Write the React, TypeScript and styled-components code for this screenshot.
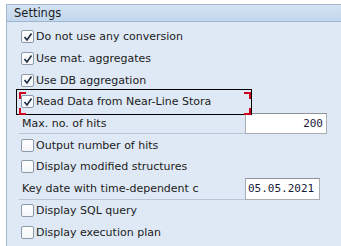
import React from 'react';
import styled, { createGlobalStyle } from 'styled-components';

const GlobalStyle = createGlobalStyle`
  html, body {
    margin: 0;
    padding: 0;
    background: #ffffff;
  }
  body {
    font-family: 'DejaVu Sans', Tahoma, sans-serif;
    font-size: 11px;
    color: #1b1b1b;
  }
`;

const Frame = styled.div`
  margin: 4px 0 0 6px;
  height: 242px;
  border-top: 1px solid #a3b7cf;
  border-left: 1px solid #a3b7cf;
  background: #dfe9f5;
  overflow: hidden;
`;

const Header = styled.div`
  height: 16px;
  line-height: 16px;
  padding-left: 7px;
  background: linear-gradient(#d3e2f3, #c3d7ed);
  border-bottom: 1px solid #9fb6d2;
  font-size: 11.5px;
`;

const Body = styled.div`
  padding: 4px 0 0 14px;
  display: flex;
  flex-direction: column;
`;

const Row = styled.div<{ focused?: boolean }>`
  position: relative;
  height: 21.7px;
  display: flex;
  align-items: center;

  ${({ focused }) =>
    focused &&
    `
    &::before {
      content: '';
      position: absolute;
      left: -5px;
      top: -2px;
      width: 234px;
      height: 24px;
      border: 1px solid #000;
    }
  `}
`;

const Corner = styled.span<{ pos: 'tl' | 'tr' | 'bl' | 'br' }>`
  position: absolute;
  width: 5px;
  height: 5px;
  border-color: #d0021b;
  border-style: solid;
  border-width: 0;
  ${({ pos }) => (pos[0] === 't' ? 'top: 1px; border-top-width: 2px;' : 'bottom: -2px; border-bottom-width: 2px;')}
  ${({ pos }) => (pos[1] === 'l' ? 'left: -2px; border-left-width: 2px;' : 'left: 223px; border-right-width: 2px;')}
`;

const Box = styled.span`
  width: 11px;
  height: 11px;
  border: 1px solid #8c99ab;
  border-radius: 2px;
  background: linear-gradient(#ffffff, #f3f5f8);
  display: flex;
  align-items: center;
  justify-content: center;
  flex-shrink: 0;
  margin-right: 2px;
`;

const Label = styled.span`
  white-space: nowrap;
`;

const FieldRow = styled.div`
  height: 21.7px;
  display: flex;
  align-items: stretch;
`;

const FieldLabel = styled.div`
  width: 226px;
  padding-left: 3px;
  display: flex;
  align-items: center;
  border-bottom: 1px solid #b9c6d6;
  box-sizing: border-box;
  margin-left: -2px;
  white-space: nowrap;
  overflow: hidden;
`;

const Input = styled.div<{ w: number; align: 'left' | 'right' }>`
  width: ${({ w }) => w}px;
  box-sizing: border-box;
  background: #fff;
  border: 1px solid #a9adb3;
  border-top-color: #8e9196;
  font-family: 'DejaVu Sans Mono', 'Liberation Mono', monospace;
  font-size: 11px;
  display: flex;
  align-items: center;
  justify-content: ${({ align }) => (align === 'right' ? 'flex-end' : 'flex-start')};
  padding: 0 3px 0 2px;
  color: #1a1a3a;
`;

const Check = () => (
  <svg width="10" height="10" viewBox="0 0 10 10">
    <path d="M1.5 5 L4 8 L8.5 1.5" fill="none" stroke="#1c2a44" strokeWidth="1.6" />
  </svg>
);

const CheckRow: React.FC<{ label: string; checked?: boolean; focused?: boolean }> = ({ label, checked, focused }) => (
  <Row focused={focused}>
    {focused && (
      <>
        <Corner pos="tl" />
        <Corner pos="tr" />
        <Corner pos="bl" />
        <Corner pos="br" />
      </>
    )}
    <Box>{checked && <Check />}</Box>
    <Label>{label}</Label>
  </Row>
);

export default function App() {
  return (
    <>
      <GlobalStyle />
      <Frame>
        <Header>Settings</Header>
        <Body>
          <CheckRow label="Do not use any conversion" checked />
          <CheckRow label="Use mat. aggregates" checked />
          <CheckRow label="Use DB aggregation" checked />
          <CheckRow label="Read Data from Near-Line Stora" checked focused />
          <FieldRow>
            <FieldLabel>Max. no. of hits</FieldLabel>
            <Input w={82} align="right">200</Input>
          </FieldRow>
          <CheckRow label="Output number of hits" />
          <CheckRow label="Display modified structures" />
          <FieldRow>
            <FieldLabel>Key date with time-dependent c</FieldLabel>
            <Input w={75} align="left">05.05.2021</Input>
          </FieldRow>
          <CheckRow label="Display SQL query" />
          <CheckRow label="Display execution plan" />
        </Body>
      </Frame>
    </>
  );
}
